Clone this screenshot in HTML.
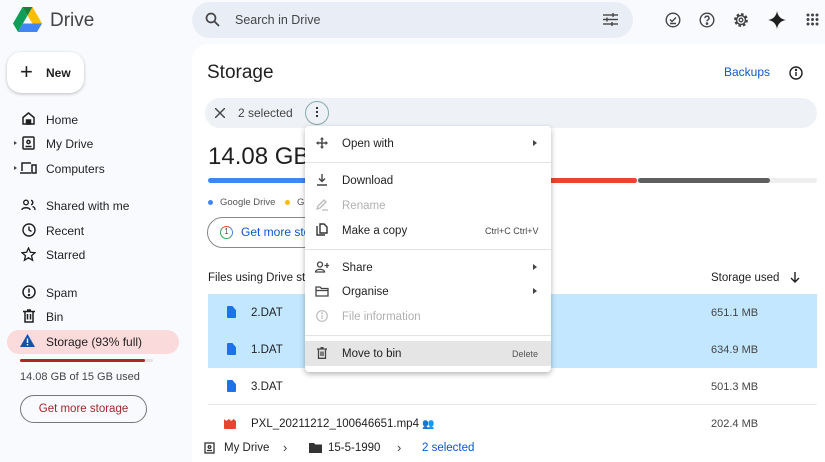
<!DOCTYPE html>
<html style="width:825px;height:462px;overflow:hidden"><head><meta charset="utf-8"><style>
*{box-sizing:border-box;margin:0;padding:0}
body{width:825px;height:462px;overflow:hidden;background:#f8fafd;font-family:"Liberation Sans",sans-serif;color:#1f1f1f;position:relative;font-size:12px}
.a{position:absolute}
.nav{position:absolute;left:46px;font-size:12px;color:#1f1f1f}
.ic{position:absolute}
.mi{position:absolute;left:342px;font-size:11.5px;color:#1f1f1f}
.dis{color:#b0b0b0}
.row{position:absolute;left:208px;width:609px;height:37px;border-bottom:1px solid #e6e6e6}
.row .n{position:absolute;left:43px;top:13px;font-size:11.5px}
.row .s{position:absolute;left:503px;top:13px;font-size:11px;color:#444}
.doc{position:absolute;left:19px;top:12px;width:9px;height:12px;background:#1a73e8;border-radius:1px;clip-path:polygon(0 0,60% 0,100% 35%,100% 100%,0 100%)}
</style></head><body>
<svg class="a" style="left:13px;top:7px" width="29" height="26" viewBox="0 0 29 26">
<polygon points="9.5,0 14.5,8.5 5,25 0,16.5" fill="#0f9d58"/>
<polygon points="14.5,8.5 19.5,0 29,16.5 24,25 19.5,16.5" fill="#fbbc04"/>
<polygon points="9.5,0 19.5,0 14.5,8.5" fill="#188038"/>
<polygon points="5,25 10,16.5 29,16.5 24,25" fill="#4285f4"/>
</svg>
<div class="a" style="left:50px;top:10px;font-size:19px;color:#444">Drive</div>
<div class="a" style="left:192px;top:2px;width:441px;height:36px;background:#e9eef6;border-radius:18px"></div>
<svg class="a" style="left:205px;top:12px" width="15" height="15" viewBox="0 0 15 15"><circle cx="6" cy="6" r="4.5" fill="none" stroke="#444" stroke-width="1.7"/><line x1="9.5" y1="9.5" x2="14" y2="14" stroke="#444" stroke-width="1.8"/></svg>
<div class="a" style="left:235px;top:13px;font-size:12.5px;color:#444">Search in Drive</div>
<svg class="a" style="left:603px;top:13px" width="15" height="13" viewBox="0 0 15 13" stroke="#444" stroke-width="1.4"><line x1="0" y1="2" x2="15" y2="2"/><line x1="0" y1="6.5" x2="15" y2="6.5"/><line x1="0" y1="11" x2="15" y2="11"/><line x1="10" y1="0" x2="10" y2="4"/><line x1="4" y1="4.5" x2="4" y2="8.5"/><line x1="9" y1="9" x2="9" y2="13"/></svg>
<svg class="a" style="left:665px;top:12px" width="16" height="16" viewBox="0 0 16 16" fill="none" stroke="#444" stroke-width="1.4"><circle cx="8" cy="8" r="6.8"/><path d="M5 7.5l2 2 4-4M5 11.5h6"/></svg>
<svg class="a" style="left:699px;top:12px" width="16" height="16" viewBox="0 0 16 16" fill="none" stroke="#444" stroke-width="1.4"><circle cx="8" cy="8" r="6.8"/><path d="M6 6.2a2 2 0 1 1 2.7 1.8c-.6.3-.7.7-.7 1.4"/><circle cx="8" cy="11.6" r=".6" fill="#444"/></svg>
<svg class="a" style="left:733px;top:12px" width="16" height="16" viewBox="0 0 16 16"><circle cx="8" cy="8" r="5.5" fill="none" stroke="#444" stroke-width="2.8" stroke-dasharray="2.4 1.9"/><circle cx="8" cy="8" r="4.5" fill="none" stroke="#444" stroke-width="1.5"/><circle cx="8" cy="8" r="1.8" fill="none" stroke="#444" stroke-width="1.3"/></svg>
<svg class="a" style="left:768px;top:11px" width="18" height="18" viewBox="0 0 18 18"><path d="M9 0C9.6 5 13 8.4 18 9 13 9.6 9.6 13 9 18 8.4 13 5 9.6 0 9 5 8.4 8.4 5 9 0z" fill="#1f1f1f"/></svg>
<svg class="a" style="left:806px;top:13px" width="13" height="13" viewBox="0 0 13 13" fill="#444"><circle cx="2" cy="2" r="1.5"/><circle cx="6.5" cy="2" r="1.5"/><circle cx="11" cy="2" r="1.5"/><circle cx="2" cy="6.5" r="1.5"/><circle cx="6.5" cy="6.5" r="1.5"/><circle cx="11" cy="6.5" r="1.5"/><circle cx="2" cy="11" r="1.5"/><circle cx="6.5" cy="11" r="1.5"/><circle cx="11" cy="11" r="1.5"/></svg>
<div class="a" style="left:7px;top:52px;width:77px;height:41px;background:#fff;border-radius:14px;box-shadow:0 1px 3px rgba(0,0,0,.25)"></div>
<div class="a" style="left:20px;top:59px;font-size:22px;font-weight:300;color:#1f1f1f">+</div>
<div class="a" style="left:46px;top:66px;font-size:12px;font-weight:bold;color:#1f1f1f">New</div>
<svg class="ic" style="left:22px;top:112px" width="13" height="13" viewBox="0 0 13 13" fill="none" stroke="#1f1f1f" stroke-width="1.5"><path d="M1 5.5L6.5 1 12 5.5V12H1z"/><rect x="4.5" y="8" width="4" height="4" fill="#1f1f1f"/></svg>
<div class="nav" style="top:113px">Home</div>
<div class="a" style="left:14px;top:141px;border-left:3px solid #444;border-top:2.5px solid transparent;border-bottom:2.5px solid transparent"></div>
<svg class="ic" style="left:22px;top:136px" width="13" height="14" viewBox="0 0 13 14" fill="none" stroke="#1f1f1f" stroke-width="1.5"><rect x="1" y="1" width="11" height="12" rx="1"/><circle cx="6.5" cy="6" r="1.6"/><path d="M3.5 10.5h6"/></svg>
<div class="nav" style="top:137px">My Drive</div>
<div class="a" style="left:14px;top:166px;border-left:3px solid #444;border-top:2.5px solid transparent;border-bottom:2.5px solid transparent"></div>
<svg class="ic" style="left:20px;top:162px" width="17" height="12" viewBox="0 0 17 12" fill="none" stroke="#1f1f1f" stroke-width="1.5"><path d="M2 9V1h9M0 11h11"/><rect x="12" y="3" width="4" height="8"/></svg>
<div class="nav" style="top:162px">Computers</div>
<svg class="ic" style="left:21px;top:199px" width="15" height="12" viewBox="0 0 15 12" fill="none" stroke="#1f1f1f" stroke-width="1.4"><circle cx="5" cy="3.5" r="2.3"/><path d="M1 11c0-3 8-3 8 0M10 1.3a2.3 2.3 0 0 1 0 4.5M11.5 7.5c2 .5 2.5 2 2.5 3.5"/></svg>
<div class="nav" style="top:199px">Shared with me</div>
<svg class="ic" style="left:22px;top:223px" width="14" height="14" viewBox="0 0 14 14" fill="none" stroke="#1f1f1f" stroke-width="1.4"><circle cx="7" cy="7" r="6"/><path d="M7 3.5V7l2.5 1.5"/></svg>
<div class="nav" style="top:224px">Recent</div>
<svg class="ic" style="left:21px;top:247px" width="15" height="15" viewBox="0 0 15 15" fill="none" stroke="#1f1f1f" stroke-width="1.3"><path d="M7.5 1l1.9 4.3 4.6.4-3.5 3 1.1 4.6-4.1-2.5-4.1 2.5 1.1-4.6-3.5-3 4.6-.4z"/></svg>
<div class="nav" style="top:248px">Starred</div>
<svg class="ic" style="left:22px;top:285px" width="14" height="14" viewBox="0 0 14 14" fill="none" stroke="#1f1f1f" stroke-width="1.5"><circle cx="7" cy="7" r="6"/><path d="M7 3.5v4.2"/><circle cx="7" cy="10" r=".5" fill="#1f1f1f"/></svg>
<div class="nav" style="top:286px">Spam</div>
<svg class="ic" style="left:23px;top:309px" width="12" height="14" viewBox="0 0 12 14" fill="none" stroke="#1f1f1f" stroke-width="1.5"><path d="M0 2.5h12M4 1h4M2 2.5V13h8V2.5M4.5 5v5.5M7.5 5v5.5"/></svg>
<div class="nav" style="top:310px">Bin</div>
<div class="a" style="left:7px;top:330px;width:172px;height:24px;background:#fadada;border-radius:12px"></div>
<svg class="ic" style="left:20px;top:334px" width="15" height="13" viewBox="0 0 15 13"><path d="M7.5 0L15 13H0z" fill="#174ea6"/><rect x="6.8" y="4.5" width="1.4" height="4.5" fill="#fff"/><rect x="6.8" y="10" width="1.4" height="1.4" fill="#fff"/></svg>
<div class="nav" style="top:335px">Storage (93% full)</div>
<div class="a" style="left:20px;top:359px;width:133px;height:3px;background:#e3e3e3;border-radius:2px"></div>
<div class="a" style="left:20px;top:359px;width:125px;height:3px;background:#b3261e;border-radius:2px"></div>
<div class="a" style="left:20px;top:371px;font-size:11px;color:#444">14.08 GB of 15 GB used</div>
<div class="a" style="left:20px;top:395px;width:127px;height:28px;border:1px solid #777;border-radius:14px;font-size:11.5px;color:#a0282a;text-align:center;line-height:26px">Get more storage</div>
<div class="a" style="left:192px;top:44px;width:633px;height:418px;background:#fff;border-radius:16px 0 0 0"></div>
<div class="a" style="left:207px;top:62px;font-size:19px">Storage</div>
<div class="a" style="left:724px;top:65px;font-size:12px;color:#0b57d0">Backups</div>
<svg class="a" style="left:789px;top:66px" width="14" height="14" viewBox="0 0 14 14" fill="none" stroke="#1f1f1f" stroke-width="1.4"><circle cx="7" cy="7" r="6"/><path d="M7 6v4"/><circle cx="7" cy="4" r=".5" fill="#1f1f1f"/></svg>
<div class="a" style="left:205px;top:98px;width:612px;height:30px;background:#eef1f6;border-radius:15px"></div>
<svg class="a" style="left:215px;top:108px" width="10" height="10" viewBox="0 0 10 10" stroke="#444" stroke-width="1.4"><line x1="0" y1="0" x2="10" y2="10"/><line x1="10" y1="0" x2="0" y2="10"/></svg>
<div class="a" style="left:238px;top:106px;font-size:12px;color:#444">2 selected</div>
<div class="a" style="left:305px;top:101px;width:24px;height:24px;border:1px solid #8aa;border-radius:50%;background:#eef1f6"></div>
<div class="a" style="left:316px;top:107px;width:2px;height:2px;background:#333;box-shadow:0 4px 0 #333,0 8px 0 #333"></div>
<div class="a" style="left:208px;top:143px;font-size:24px">14.08 GB</div>
<div class="a" style="left:208px;top:178px;width:609px;height:5px;background:#eee;border-radius:3px"></div>
<div class="a" style="left:208px;top:178px;width:200px;height:5px;background:#4285f4;border-radius:3px"></div>
<div class="a" style="left:500px;top:178px;width:137px;height:5px;background:#ea4335;border-radius:3px"></div>
<div class="a" style="left:638px;top:178px;width:132px;height:5px;background:#5f5f5f;border-radius:3px"></div>
<div class="a" style="left:208px;top:200px;width:5px;height:5px;background:#4285f4;border-radius:50%"></div>
<div class="a" style="left:220px;top:197px;font-size:9.5px;color:#555">Google Drive</div>
<div class="a" style="left:285px;top:200px;width:5px;height:5px;background:#fbbc04;border-radius:50%"></div>
<div class="a" style="left:297px;top:197px;font-size:9.5px;color:#555">G</div>
<div class="a" style="left:207px;top:217px;width:120px;height:31px;border:1px solid #888;border-radius:16px"></div>
<div class="a" style="left:220px;top:226px;width:13px;height:13px;border-radius:50%;border:1.5px solid #34a853;border-top-color:#ea4335;border-right-color:#4285f4;font-size:8px;text-align:center;line-height:10px;color:#555">1</div>
<div class="a" style="left:241px;top:225px;font-size:12px;color:#0b57d0">Get more sto</div>
<div class="a" style="left:208px;top:272px;font-size:11.5px">Files using Drive sto</div>
<div class="a" style="left:711px;top:272px;font-size:11.5px">Storage used</div>
<svg class="a" style="left:790px;top:272px" width="10" height="11" viewBox="0 0 10 11" fill="none" stroke="#1f1f1f" stroke-width="1.4"><path d="M5 0v10M1 6l4 4 4-4"/></svg>
<div class="row" style="top:294px;background:#c2e7ff;border-bottom-color:#c2e7ff"><div class="doc"></div><div class="n">2.DAT</div><div class="s">651.1 MB</div></div>
<div class="row" style="top:331px;background:#c2e7ff;border-bottom-color:#c2e7ff"><div class="doc"></div><div class="n">1.DAT</div><div class="s">634.9 MB</div></div>
<div class="row" style="top:368px"><div class="doc"></div><div class="n">3.DAT</div><div class="s">501.3 MB</div></div>
<div class="row" style="top:405px;border:none"><div class="doc" style="background:#ea4335;clip-path:polygon(0 0,20% 20%,40% 0,60% 20%,80% 0,100% 20%,100% 100%,0 100%);width:12px;left:16px;top:14px;height:10px"></div><div class="n">PXL_20211212_100646651.mp4 <span style="font-size:10px">👥</span></div><div class="s">202.4 MB</div></div>
<div class="a" style="left:192px;top:432px;width:633px;height:30px;background:#fff"></div>
<svg class="a" style="left:204px;top:442px" width="11" height="12" viewBox="0 0 11 12" fill="none" stroke="#333" stroke-width="1.3"><rect x="1" y="1" width="9" height="10"/><circle cx="5.5" cy="5" r="1.3"/><path d="M3 8.5h5"/></svg>
<div class="a" style="left:224px;top:442px;font-size:11.5px">My Drive</div>
<div class="a" style="left:283px;top:440px;font-size:13px;color:#444">›</div>
<svg class="a" style="left:309px;top:443px" width="13" height="10" viewBox="0 0 13 10"><path d="M0 0h5l1.5 1.5H13V10H0z" fill="#333"/></svg>
<div class="a" style="left:328px;top:442px;font-size:11.5px">15-5-1990</div>
<div class="a" style="left:397px;top:440px;font-size:13px;color:#444">›</div>
<div class="a" style="left:422px;top:442px;font-size:11.5px;color:#0b57d0">2 selected</div>
<div class="a" style="left:305px;top:126px;width:246px;height:246px;background:#fff;border-radius:4px;box-shadow:0 2px 6px rgba(0,0,0,.3)"></div>
<div class="a" style="left:305px;top:162px;width:246px;height:1px;background:#e3e3e3"></div>
<div class="a" style="left:305px;top:249px;width:246px;height:1px;background:#e3e3e3"></div>
<div class="a" style="left:305px;top:335px;width:246px;height:1px;background:#e3e3e3"></div>
<div class="a" style="left:305px;top:341px;width:246px;height:25px;background:#e5e5e5"></div>
<svg class="a" style="left:316px;top:137px" width="12" height="12" viewBox="0 0 12 12" fill="#444"><path d="M6 0l2 2.5H4zM6 12l2-2.5H4zM0 6l2.5-2v4zM12 6l-2.5-2v4z"/><rect x="5.3" y="2" width="1.4" height="8"/><rect x="2" y="5.3" width="8" height="1.4"/></svg>
<div class="mi" style="top:138px">Open with</div>
<div class="a" style="left:533px;top:140px;border-left:4px solid #444;border-top:3.5px solid transparent;border-bottom:3.5px solid transparent"></div>
<svg class="a" style="left:316px;top:174px" width="12" height="12" viewBox="0 0 12 12" fill="none" stroke="#444" stroke-width="1.4"><path d="M6 0v7M3 4.5L6 7.5 9 4.5M1 11h10"/></svg>
<div class="mi" style="top:175px">Download</div>
<svg class="a" style="left:316px;top:199px" width="12" height="12" viewBox="0 0 12 12" fill="none" stroke="#bbb" stroke-width="1.3"><path d="M1 10l1-3 6-6 2 2-6 6zM6 11h6"/></svg>
<div class="mi dis" style="top:200px">Rename</div>
<svg class="a" style="left:316px;top:223px" width="12" height="13" viewBox="0 0 12 13" fill="none" stroke="#333" stroke-width="1.4"><path d="M1 3v9h8"/><path d="M4 1h4l3 3v6H4z"/></svg>
<div class="mi" style="top:225px">Make a copy</div>
<div class="a" style="left:485px;top:226px;font-size:9px;color:#444">Ctrl+C Ctrl+V</div>
<svg class="a" style="left:315px;top:261px" width="14" height="12" viewBox="0 0 14 12" fill="none" stroke="#444" stroke-width="1.3"><circle cx="5" cy="3.5" r="2.5"/><path d="M0.5 11c0-3.5 9-3.5 9 0zM12 2v5M9.5 4.5h5"/></svg>
<div class="mi" style="top:262px">Share</div>
<div class="a" style="left:533px;top:264px;border-left:4px solid #444;border-top:3.5px solid transparent;border-bottom:3.5px solid transparent"></div>
<svg class="a" style="left:315px;top:286px" width="14" height="11" viewBox="0 0 14 11" fill="none" stroke="#444" stroke-width="1.3"><path d="M1 1h4l1.5 1.5H13V10H1z"/><path d="M1 4.5h12"/></svg>
<div class="mi" style="top:286px">Organise</div>
<div class="a" style="left:533px;top:288px;border-left:4px solid #444;border-top:3.5px solid transparent;border-bottom:3.5px solid transparent"></div>
<svg class="a" style="left:316px;top:310px" width="12" height="12" viewBox="0 0 12 12" fill="none" stroke="#bbb" stroke-width="1.2"><circle cx="6" cy="6" r="5.3"/><path d="M6 5v4"/><circle cx="6" cy="3.3" r=".4"/></svg>
<div class="mi dis" style="top:311px">File information</div>
<svg class="a" style="left:317px;top:347px" width="10" height="12" viewBox="0 0 10 12" fill="none" stroke="#444" stroke-width="1.3"><path d="M0 2h10M3.5 .7h3M1.5 2v9.3h7V2M4 4.5v4.5M6 4.5v4.5"/></svg>
<div class="mi" style="top:348px">Move to bin</div>
<div class="a" style="left:512px;top:349px;font-size:9px;color:#555">Delete</div>
</body></html>
